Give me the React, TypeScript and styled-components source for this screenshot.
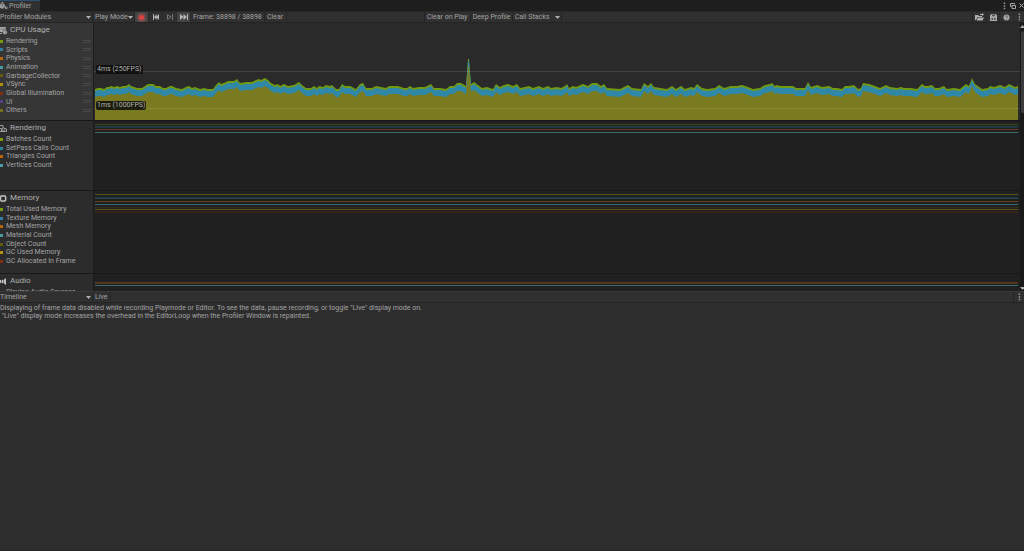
import React from "react";
import styled, { createGlobalStyle } from "styled-components";

const GlobalStyle = createGlobalStyle`
  * { box-sizing: border-box; }
  html, body, #root { height: 100%; margin: 0; }
  body { background: #2d2d2d; overflow: hidden; }
  body, button, select { font-family: Roboto, Inter, sans-serif; font-size: 7px; line-height: 9px; color: #a4a4a4; }
  button, select { appearance: none; background: none; border: 0; border-radius: 0; margin: 0; padding: 0; }
  h2, p, ul { margin: 0; padding: 0; font-weight: 400; }
`;

const Window = styled.div`
  height: 100%;
  display: flex;
  flex-direction: column;
  white-space: nowrap;
`;

const TabBar = styled.header`
  flex: none;
  height: 11px;
  display: flex;
  justify-content: space-between;
  background: #1e1e1e;
`;

const Tab = styled.button`
  width: 40px;
  display: flex;
  align-items: center;
  gap: 1px;
  border-top: 1px solid #2a4d70;
  background: #303030;
`;

const WindowControls = styled.div`
  display: flex;
  align-items: center;
  gap: 1px;
`;

const IconButton = styled.button<{ $width?: number; $active?: boolean }>`
  flex: none;
  width: ${(p) => p.$width ?? 14}px;
  height: 100%;
  display: flex;
  align-items: center;
  justify-content: center;
  background: ${(p) => (p.$active ? "#444444" : "transparent")};
  border-right: 1px solid #2a2a2a;
`;

const CaptionButton = styled(IconButton)`
  border-right: 0;
`;

const Toolbar = styled.div`
  flex: none;
  height: 12px;
  display: flex;
  align-items: stretch;
  background: #303030;
  border-top: 1px solid #282828;
  border-bottom: 1px solid #242424;
`;

const DetailToolbar = styled(Toolbar)`
  border-top-color: #3a3a3a;
`;

const ToolGroup = styled.div`
  flex: none;
  display: flex;
  border-left: 1px solid #242424;
`;

const Spacer = styled.div<{ $grow?: number }>`
  flex: ${(p) => p.$grow ?? 1} 1 0;
`;

const SelectBox = styled.label<{ $width: number }>`
  position: relative;
  flex: none;
  width: ${(p) => p.$width}px;
  display: flex;
  align-items: center;
  border-right: 1px solid #242424;
  & > svg { position: absolute; right: 1px; }
`;

const Select = styled.select<{ $inset?: boolean }>`
  width: 100%;
  height: 100%;
  padding-left: ${(p) => (p.$inset ? 2 : 0)}px;
`;

const ToolButton = styled.button<{ $width: number }>`
  flex: none;
  width: ${(p) => p.$width}px;
  padding-left: 2px;
  text-align: left;
  border-right: 1px solid #262626;
`;

const FrameLabel = styled.span`
  flex: none;
  width: 74px;
  padding-left: 2px;
  align-self: stretch;
  display: flex;
  align-items: center;
  border-right: 1px solid #262626;
`;

const Modules = styled.main`
  flex: none;
  display: flex;
`;

const ModuleList = styled.div`
  flex: 1;
  min-width: 0;
`;

const Module = styled.section<{ $height: number; $selected?: boolean }>`
  height: ${(p) => p.$height}px;
  display: flex;
  overflow: hidden;
  background: ${(p) => (p.$selected ? "#2a2a2a" : "#202020")};
  border-bottom: 1px solid #181818;
  &:last-child { border-bottom: 0; }
`;

const Side = styled.div<{ $selected?: boolean }>`
  flex: none;
  width: 94px;
  padding-top: 2px;
  background: ${(p) => (p.$selected ? "#363636" : "#2c2c2c")};
  border-right: 1px solid #1c1c1c;
`;

const ModuleTitle = styled.h2`
  height: 10px;
  display: flex;
  align-items: center;
  gap: 2px;
  margin-bottom: 2px;
  font-size: 8px;
  line-height: 10px;
  color: #b0b0b0;
  & > svg { flex: none; }
`;

const Legend = styled.ul<{ $rows: number }>`
  list-style: none;
  display: grid;
  grid-template-rows: repeat(${(p) => p.$rows}, minmax(0, 1fr));
  height: ${(p) => Math.ceil(p.$rows * 8.6)}px;
`;

const LegendItem = styled.li`
  display: flex;
  align-items: center;
  gap: 3px;
`;

const Swatch = styled.span<{ $color: string }>`
  width: 3px;
  height: 3px;
  background: ${(p) => p.$color};
`;

const Grip = styled.span`
  width: 8px;
  height: 3px;
  margin-left: auto;
  margin-right: 2px;
  border: solid #484848;
  border-width: 1px 0;
`;

const ChartArea = styled.div`
  position: relative;
  flex: 1;
  min-width: 0;
  padding: 0 2px 0 1px;
`;

const Plot = styled.svg`
  display: block;
  width: 100%;
  height: 100%;
`;

const GridLine = styled.div<{ $top: number }>`
  position: absolute;
  left: 0;
  right: 0;
  top: ${(p) => p.$top}px;
  height: 1px;
  background: rgba(255, 255, 255, 0.12);
`;

const GridLabel = styled.span<{ $top: number }>`
  position: absolute;
  left: 2px;
  top: ${(p) => p.$top}px;
  padding: 0 1px;
  border-radius: 2px;
  background: rgba(12, 12, 10, 0.85);
  color: #b0b0b0;
`;

const Scrollbar = styled.div`
  flex: none;
  width: 4px;
  display: flex;
  flex-direction: column;
  align-items: center;
  padding: 2px 0 1px;
  background: #191919;
`;

const Thumb = styled.div`
  width: 3px;
  height: 82px;
  margin-bottom: auto;
  margin-top: 3px;
  border-radius: 2px;
  background: #3c3c3c;
`;

const Details = styled.section`
  flex: 1;
  background: #2d2d2d;
  border-bottom: 1px solid #292527;
  padding-top: 1px;
  line-height: 8px;
`;

const Message = styled.p`
  white-space: pre;
`;

const Arrow = ({ up = false }: { up?: boolean }) => (
  <svg width="5" height="3" viewBox="0 0 5 3" fill="#b0b0b0">
    <path d={up ? "M0 3 2.500 0 5 3z" : "M0 0h5L2.500 3z"} />
  </svg>
);

const Dots = () => (
  <svg width="3" height="8" viewBox="0 0 3 8" fill="#989898">
    <path d="M.7.6h1.500v1.500H.7zM.7 3.200h1.500v1.500H.7zM.7 5.800h1.500v1.500H.7z" />
  </svg>
);

const ProfilerIcon = () => (
  <svg width="8" height="8" viewBox="0 0 8 8" fill="none" stroke="#a8a8a8">
    <circle cx="2.300" cy="4" r="2.300" fill="#a0a0a0" strokeWidth=".8" />
    <path d="M2.300 4V2.200M2.300 4l1.300 1" stroke="#303030" strokeWidth=".6" />
    <path d="M1.300.6h2M5.500 4.300v2.200h1.500V4.600" strokeWidth=".9" />
  </svg>
);

const CpuIcon = () => (
  <svg width="8" height="9" viewBox="0 0 8 9">
    <path d="M0 1h5.800v5H0z" fill="#a8a8a8" />
    <path d="M0 3.800 1.500 2.300 3 4 5.800 2" fill="none" stroke="#606060" strokeWidth=".6" />
    <circle cx="5" cy="6.200" r="2.200" fill="#b4b4b4" stroke="#363636" strokeWidth=".5" />
    <path d="M5 6.200V5M5 6.200l1 .6" stroke="#464646" strokeWidth=".5" />
    <path d="M0 7.500h2" stroke="#a8a8a8" />
  </svg>
);

const RenderingIcon = () => (
  <svg width="8" height="9" viewBox="0 0 8 9" fill="none" stroke="#a8a8a8" strokeWidth=".9">
    <path d="M0 1.500h3v2.500M0 7.500h6.500V5L5 4.200M0 4.500h1.500v3" />
    <circle cx="3.500" cy="5.300" r="1.300" />
  </svg>
);

const MemoryIcon = () => (
  <svg width="8" height="9" viewBox="0 0 8 9" fill="none" stroke="#c0c0c0">
    <rect x=".6" y="2" width="5" height="5" rx="1" strokeWidth="1.300" />
    <path d="M1.800.8v1M4.500.8v1M1.800 7.200v1M4.500 7.200v1M5.600 3.200h1M5.600 5.800h1" strokeWidth=".8" />
  </svg>
);

const AudioIcon = () => (
  <svg width="8" height="9" viewBox="0 0 8 9" fill="#c0c0c0">
    <path d="M0 3h1v3H0zM1.500 3.500 3 2.500v4L1.500 5.500zM3.500 3 6 1v7L3.500 6z" />
  </svg>
);

const samples: number[] = [
  95,89,98,88,101,88,104,89,107,87,109,87,111,86,114,87,117,86,120,87,123,86,126,86,129,84,131,86,134,87,137,88,142,88,145,86,148,84,153,84,156,86,160,86,163,88,166,88,170,86,172,86,176,88,182,89,186,87,189,86,192,88,195,87,200,89,204,88,208,89,213,89,216,85,219,82,221,84,224,83,228,81,234,81,237,79,240,83,246,82,252,82,256,80,259,79,261,80,265,78,268,80,271,83,275,85,278,84,280,86,284,84,288,86,294,85,299,82,302,85,306,88,311,88,314,86,317,88,319,86,323,87,326,85,330,86,
  332,85,336,89,339,89,342,84,345,86,350,86,356,89,360,84,363,83,366,88,372,88,376,86,381,87,386,88,389,86,398,86,404,88,407,88,410,86,413,88,419,87,425,87,431,84,434,88,440,88,446,89,450,86,454,86,457,83,461,83,466,86,468,59,469,59,471,84,474,82,478,85,482,88,487,87,493,89,496,84,500,87,504,85,508,84,513,86,517,84,520,88,525,87,529,86,533,88,539,86,543,88,548,86,551,88,557,87,561,88,565,86,567,84,569,88,
  573,86,576,87,583,84,588,86,592,83,597,83,601,86,604,84,607,88,620,89,628,85,632,88,641,89,644,83,648,86,651,83,654,87,667,89,672,86,676,89,681,86,685,89,691,87,694,88,697,84,702,88,707,89,715,88,719,85,724,88,731,86,737,86,742,85,748,87,753,89,760,88,765,85,770,84,772,83,775,86,777,85,780,86,793,86,
  796,88,805,88,808,82,811,87,817,85,822,87,829,86,833,88,837,88,842,89,845,86,849,86,854,85,858,89,861,88,863,83,869,84,875,86,880,88,886,85,890,87,897,88,901,87,904,88,910,88,917,89,922,84,925,86,928,86,932,85,935,88,939,88,944,86,947,89,954,88,960,89,966,84,969,86,972,78,975,84,982,89,988,88,990,86,994,87,1000,85,1005,87,1009,84,1015,87,1018,86,
];

const area = (offset: number) => {
  let d = "M95 120";
  for (let i = 0; i < samples.length; i += 2) d += `L${samples[i]} ${samples[i + 1] + offset}`;
  return `${d}L1018 120z`;
};

const CpuChart = () => (
  <Plot viewBox="95 23 923 97" preserveAspectRatio="none">
    <path d={area(0)} fill="#729a10" />
    <path d={area(2)} fill="#3088a8" />
    <path d={area(8)} fill="#7a7a20" />
  </Plot>
);

type Line = [y: number, color: string];

const LineChart = ({ height, lines }: { height: number; lines: Line[] }) => (
  <Plot viewBox={`0 0 923 ${height}`} preserveAspectRatio="none" shapeRendering="crispEdges">
    {lines.map(([y, color]) => (
      <rect key={y} x="0" y={y} width="923" height="1" fill={color} />
    ))}
  </Plot>
);

const palette = ["#7a9a08", "#2e7fa0", "#b86408", "#4a9ca4", "#625c10", "#b09008", "#842c10", "#54407c", "#76721c"];

const modules = [
  {
    title: "CPU Usage", icon: <CpuIcon />, height: 98, plot: 97,
    items: ["Rendering", "Scripts", "Physics", "Animation", "GarbageCollector", "VSync", "Global Illumination", "UI", "Others"],
    lines: [] as Line[],
  },
  {
    title: "Rendering", icon: <RenderingIcon />, height: 70, plot: 69,
    items: ["Batches Count", "SetPass Calls Count", "Triangles Count", "Vertices Count"],
    lines: [[3, "#3c4418"], [5, "#24404c"], [6, "#20343c"], [8, "#683c18"], [11, "#406c70"]] as Line[],
  },
  {
    title: "Memory", icon: <MemoryIcon />, height: 83, plot: 82,
    items: ["Total Used Memory", "Texture Memory", "Mesh Memory", "Material Count", "Object Count", "GC Used Memory", "GC Allocated In Frame"],
    lines: [[3, "#4c5818"], [6, "#22363e"], [7, "#244450"], [10, "#684018"], [13, "#346870"], [16, "#30301c"], [18, "#5c541c"], [20, "#38241c"], [21, "#38201c"]] as Line[],
  },
  {
    title: "Audio", icon: <AudioIcon />, height: 17, plot: 17,
    items: ["Playing Audio Sources"],
    lines: [[8, "#54341a"], [9, "#54341a"], [11, "#386870"]] as Line[],
  },
];

export default function App() {
  return (
    <Window>
      <GlobalStyle />
      <TabBar>
        <Tab><ProfilerIcon />Profiler</Tab>
        <WindowControls>
          <CaptionButton $width={8} aria-label="Window menu"><Dots /></CaptionButton>
          <CaptionButton $width={8} aria-label="Maximize">
            <svg width="6" height="6" viewBox="0 0 6 6" fill="none" stroke="#a8a8a8"><path d="M1.500 3.500h-1v-3h4v1M2 2.500h3.500v3H2z" /></svg>
          </CaptionButton>
          <CaptionButton $width={6} aria-label="Close">
            <svg width="5" height="5" viewBox="0 0 5 5" stroke="#b0b0b0"><path d="m.5.500 4 4m0-4-4 4" /></svg>
          </CaptionButton>
        </WindowControls>
      </TabBar>
      <Toolbar>
        <SelectBox $width={93}>
          <Select aria-label="Profiler modules"><option>Profiler Modules</option></Select><Arrow />
        </SelectBox>
        <SelectBox $width={42}>
          <Select $inset aria-label="Target"><option>Play Mode</option></Select><Arrow />
        </SelectBox>
        <IconButton $active aria-label="Record">
          <svg width="9" height="9" viewBox="0 0 9 9"><circle cx="4.500" cy="4.500" r="3.900" fill="none" stroke="#b06060" strokeWidth=".7" /><circle cx="4.500" cy="4.500" r="2.700" fill="#d84440" /></svg>
        </IconButton>
        <IconButton aria-label="Previous frame">
          <svg width="6" height="6" viewBox="0 0 6 6" fill="#b4b4b4"><path d="M0 0h1v6H0zM3.500 0v6L1 3zM6 0v6L3 3z" /></svg>
        </IconButton>
        <IconButton aria-label="Next frame">
          <svg width="6" height="6" viewBox="0 0 6 6" fill="none" stroke="#787878"><path d="M5.500 0v6M.5.800v4.400L4 3z" /></svg>
        </IconButton>
        <IconButton $active aria-label="Current frame">
          <svg width="8" height="6" viewBox="0 0 8 6" fill="#b8b8b8"><path d="M0 0v6l3.500-3zM3.500 0v6L7 3zM7 0h1v6H7z" /></svg>
        </IconButton>
        <FrameLabel>Frame: 38898 / 38898</FrameLabel>
        <ToolButton $width={22}>Clear</ToolButton>
        <Spacer />
        <ToolGroup>
          <ToolButton $width={46}>Clear on Play</ToolButton>
          <ToolButton $width={42}>Deep Profile</ToolButton>
          <SelectBox $width={49}>
            <Select $inset aria-label="Call stacks"><option>Call Stacks</option></Select><Arrow />
          </SelectBox>
        </ToolGroup>
        <Spacer $grow={3} />
        <ToolGroup>
          <IconButton aria-label="Load">
            <svg width="9" height="8" viewBox="0 0 9 8" fill="#b0b0b0"><path d="M0 2h3l1 1h3v1H2.500L1 7H0zM3 4.500h6L7.500 7.500h-6zM5 2V1h2V0l2 1.500L7 3V2z" /></svg>
          </IconButton>
          <IconButton $width={13} aria-label="Save">
            <svg width="7" height="7" viewBox="0 0 7 7"><path d="M0 1h7v6H0zM1 0h5v1H1z" fill="#a8a8a8" /><path d="M2 .5h3v1.800H2zM1.500 4h1.500v2H1.500zM4 4h1.500v2H4z" fill="#505050" /></svg>
          </IconButton>
          <IconButton aria-label="Help">
            <svg width="7" height="7" viewBox="0 0 7 7"><circle cx="3.500" cy="3.500" r="3" fill="#a8a8a8" /><path d="M2.500 2.700q0-1 1-1t1 1-1 1.300M3.500 4.700v.8" fill="none" stroke="#404040" strokeWidth=".6" /></svg>
          </IconButton>
          <CaptionButton $width={10} aria-label="More"><Dots /></CaptionButton>
        </ToolGroup>
      </Toolbar>
      <Modules>
        <ModuleList>
          {modules.map((m, index) => (
            <Module key={m.title} $height={m.height} $selected={index === 0}>
              <Side $selected={index === 0}>
                <ModuleTitle>{m.icon}{m.title}</ModuleTitle>
                <Legend $rows={m.items.length}>
                  {m.items.map((item, i) => (
                    <LegendItem key={item}>
                      <Swatch $color={palette[i]} />{item}
                      {index === 0 && <Grip />}
                    </LegendItem>
                  ))}
                </Legend>
              </Side>
              <ChartArea>
                {index === 0 ? (
                  <>
                    <CpuChart />
                    <GridLine $top={48} />
                    <GridLine $top={85} />
                    <GridLabel $top={42}>4ms (250FPS)</GridLabel>
                    <GridLabel $top={78}>1ms (1000FPS)</GridLabel>
                  </>
                ) : (
                  <LineChart height={m.plot} lines={m.lines} />
                )}
              </ChartArea>
            </Module>
          ))}
        </ModuleList>
        <Scrollbar><Arrow up /><Thumb /><Arrow /></Scrollbar>
      </Modules>
      <DetailToolbar>
        <SelectBox $width={93}>
          <Select aria-label="Detail view"><option>Timeline</option></Select><Arrow />
        </SelectBox>
        <ToolButton $width={18}>Live</ToolButton>
        <Spacer />
        <ToolGroup>
          <CaptionButton $width={10} aria-label="Detail menu"><Dots /></CaptionButton>
        </ToolGroup>
      </DetailToolbar>
      <Details>
        <Message>Displaying of frame data disabled while recording Playmode or Editor. To see the data, pause recording, or toggle "Live" display mode on.</Message>
        <Message> "Live" display mode increases the overhead in the EditorLoop when the Profiler Window is repainted.</Message>
      </Details>
    </Window>
  );
}
